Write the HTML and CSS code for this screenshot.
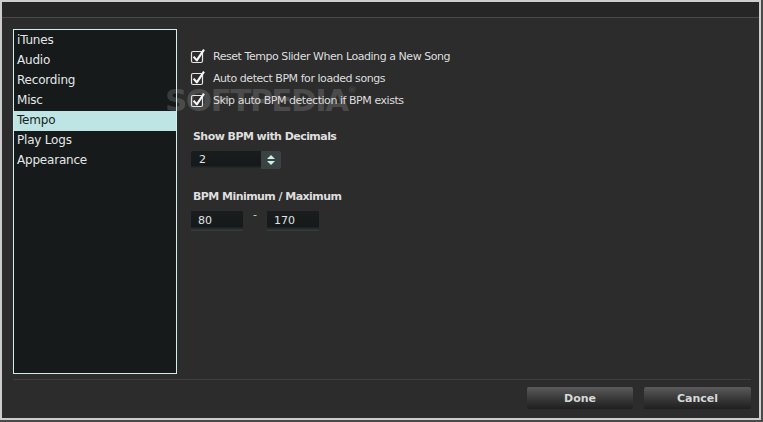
FILE: index.html
```html
<!DOCTYPE html>
<html>
<head>
<meta charset="utf-8">
<link rel="stylesheet" href="styles.css">
</head>
<body>
<div class="dialog">
  <div class="titlebar"></div>
  <div class="main">
    <ul class="nav">
      <li>iTunes</li>
      <li>Audio</li>
      <li>Recording</li>
      <li>Misc</li>
      <li class="active">Tempo</li>
      <li>Play Logs</li>
      <li>Appearance</li>
    </ul>
    <div class="pane">
      <div class="checks">
        <label class="check"><svg class="cb" width="16" height="16" viewBox="0 0 16 16"><rect x="1.5" y="3.5" width="11" height="11" rx="1.5" fill="none" stroke="#e6e6e6" stroke-width="1.2"/><path d="M3.6 8.6 L6.8 12.4 L14 1.6" fill="none" stroke="#f4f4f4" stroke-width="2.2" stroke-linejoin="round"/></svg><span>Reset Tempo Slider When Loading a New Song</span></label>
        <label class="check"><svg class="cb" width="16" height="16" viewBox="0 0 16 16"><rect x="1.5" y="3.5" width="11" height="11" rx="1.5" fill="none" stroke="#e6e6e6" stroke-width="1.2"/><path d="M3.6 8.6 L6.8 12.4 L14 1.6" fill="none" stroke="#f4f4f4" stroke-width="2.2" stroke-linejoin="round"/></svg><span>Auto detect BPM for loaded songs</span></label>
        <label class="check"><svg class="cb" width="16" height="16" viewBox="0 0 16 16"><rect x="1.5" y="3.5" width="11" height="11" rx="1.5" fill="none" stroke="#e6e6e6" stroke-width="1.2"/><path d="M3.6 8.6 L6.8 12.4 L14 1.6" fill="none" stroke="#f4f4f4" stroke-width="2.2" stroke-linejoin="round"/></svg><span>Skip auto BPM detection if BPM exists</span></label>
      </div>
      <div class="heading h1">Show BPM with Decimals</div>
      <div class="spinner">
        <span class="spin-val">2</span>
        <span class="spin-btn"><svg width="10" height="12" viewBox="0 0 10 12"><path d="M1 5 L5 1 L9 5 Z M1 7 L5 11 L9 7 Z" fill="#cfeeee"/></svg></span>
      </div>
      <div class="heading h2">BPM Minimum / Maximum</div>
      <div class="range">
        <span class="field">80</span>
        <span class="dash">-</span>
        <span class="field">170</span>
      </div>
    </div>
  </div>
  <div class="footer">
    <button class="btn">Done</button>
    <button class="btn">Cancel</button>
  </div>
  <div class="watermark">SOFTPEDIA<sup>®</sup></div>
</div>
</body>
</html>
```

FILE: styles.css
```css
html, body {
  margin: 0;
  padding: 0;
}
body {
  width: 763px;
  height: 422px;
  background: #4a4a4a;
  font-family: "DejaVu Sans", "Liberation Sans", sans-serif;
  overflow: hidden;
}
.dialog {
  position: relative;
  box-sizing: border-box;
  width: 761px;
  height: 420px;
  border: 2px solid #cdcdcd;
  background: #2c2c2c;
  display: flex;
  flex-direction: column;
}
.titlebar {
  height: 15px;
  background: #262626;
  border-bottom: 1px solid #4a4a4a;
  flex: none;
}
.main {
  display: flex;
  padding: 11px 8px 0 11px;
  height: 345px;
  flex: none;
}
.nav {
  list-style: none;
  margin: 0;
  padding: 1px 0 0 0;
  box-sizing: border-box;
  width: 164px;
  height: 345px;
  border: 1px solid #d6ecec;
  background: #161a1b;
}
.nav li {
  height: 20px;
  line-height: 19px;
  padding-left: 3px;
  font-size: 12px;
  letter-spacing: -0.2px;
  color: #e4e8e8;
}
.nav li.active {
  background: #bee4e4;
  color: #1a1f1f;
}
.pane {
  padding-left: 13px;
  flex: 1;
}
.checks {
  padding-top: 19px;
  display: flex;
  flex-direction: column;
  gap: 6px;
}
.check {
  display: flex;
  align-items: center;
  height: 16px;
  font-size: 11px;
  letter-spacing: -0.45px;
  color: #dedede;
}
.cb {
  flex: none;
  margin-right: 7px;
}
.heading {
  font-weight: bold;
  font-size: 11px;
  letter-spacing: -0.55px;
  color: #dedede;
  padding-left: 3px;
}
.h1 {
  margin-top: 22px;
}
.spinner {
  margin-top: 8px;
  margin-left: 1px;
  width: 90px;
  height: 18px;
  display: flex;
  border-radius: 2px;
  overflow: hidden;
}
.spin-val {
  flex: 1;
  background: linear-gradient(#1a1d1e 0%, #15191a 80%, #2c3232 100%);
  color: #e2e2e2;
  font-size: 11px;
  line-height: 18px;
  padding-left: 8px;
}
.spin-btn {
  width: 20px;
  background: #3b4242;
  display: flex;
  align-items: center;
  justify-content: center;
}
.h2 {
  margin-top: 21px;
}
.range {
  margin-top: 8px;
  margin-left: 1px;
  display: flex;
  align-items: flex-start;
}
.field {
  box-sizing: border-box;
  width: 52px;
  height: 20px;
  background: linear-gradient(#1a1d1e 0%, #15191a 78%, #3a3f3f 100%);
  color: #e2e2e2;
  font-size: 11px;
  line-height: 19px;
  padding-left: 7px;
}
.dash {
  width: 24px;
  text-align: center;
  color: #cfcfcf;
  font-size: 11px;
  line-height: 8px;
}
.footer {
  margin: 5px 8px 0 11px;
  border-top: 1px solid #3f3f3f;
  padding-top: 7px;
  display: flex;
  justify-content: flex-end;
  gap: 11px;
}
.btn {
  width: 106px;
  height: 22px;
  border: none;
  border-radius: 2px;
  background: linear-gradient(#5b5b5b 0%, #3a3a3a 50%, #1f1f1f 100%);
  color: #d8d8d8;
  font-family: "DejaVu Sans", sans-serif;
  font-weight: bold;
  font-size: 11px;
  padding: 0;
}
.btn + .btn {
  width: 107px;
}
.watermark {
  position: absolute;
  left: 163px;
  top: 80px;
  font-family: "DejaVu Sans", sans-serif;
  font-weight: bold;
  font-size: 31px;
  letter-spacing: -1.5px;
  color: rgba(210, 210, 210, 0.2);
  pointer-events: none;
}
.watermark sup {
  font-size: 9px;
  vertical-align: 18px;
}
```
